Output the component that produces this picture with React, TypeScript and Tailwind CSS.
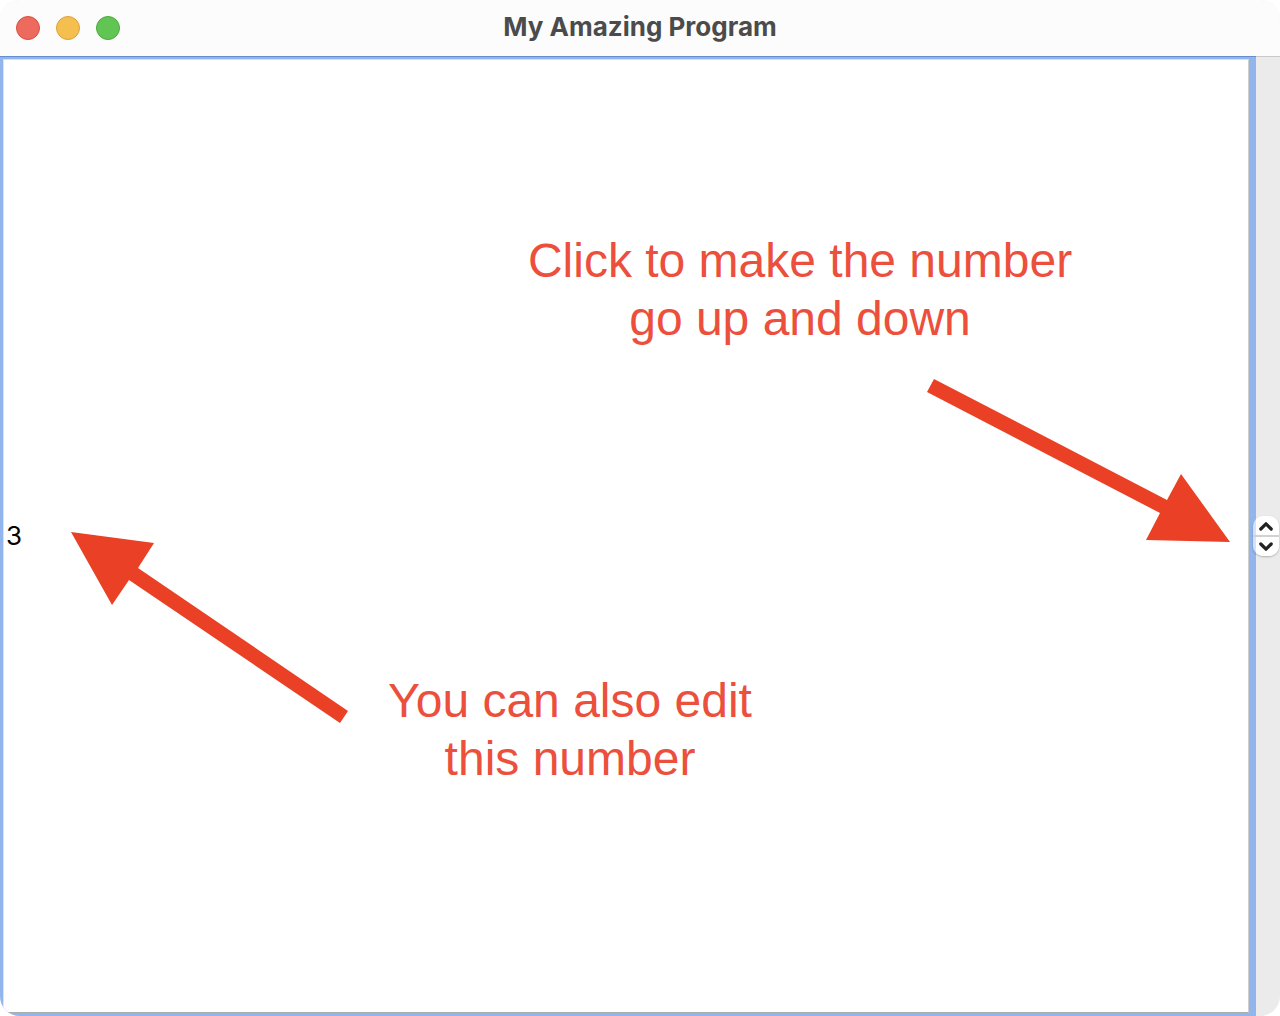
import { useState } from "react";

function Arrow({ points, className }: { points: string; className: string }) {
  return (
    <svg
      aria-hidden="true"
      className={`pointer-events-none absolute inset-0 h-full w-full overflow-visible ${className}`}
    >
      <polygon points={points} />
    </svg>
  );
}

function TitleBar() {
  return (
    <header className="grid h-14 shrink-0 grid-cols-[1fr_auto_1fr] items-center bg-[#fcfcfc] px-4">
      <div className="flex gap-4">
        <button aria-label="Close" className="size-6 rounded-full border border-[#d8503f] bg-[#ec6a5e]" />
        <button aria-label="Minimize" className="size-6 rounded-full border border-[#d8a13a] bg-[#f5bf4f]" />
        <button aria-label="Zoom" className="size-6 rounded-full border border-[#4fa73c] bg-[#61c554]" />
      </div>
      <h1 className="pb-0.5 font-['Inter',sans-serif] text-[26px] leading-8 font-bold text-[#4b4b4b]">
        My Amazing Program
      </h1>
    </header>
  );
}

export default function App() {
  const [value, setValue] = useState("3");
  const step = (delta: number) => setValue(String((Number(value) || 0) + delta));

  return (
    <div className="flex h-screen flex-col overflow-hidden rounded-[20px] bg-[#ebebeb] font-['Liberation_Sans',Arial,sans-serif]">
      <TitleBar />
      <main className="flex min-h-0 flex-1">
        <div className="relative flex flex-1 border-t border-t-[#648fcf] bg-[#91b5ec] pt-0.5 pr-[7px] pb-[3px] pl-[3px]">
          <input
            aria-label="Number"
            value={value}
            onChange={(e) => setValue(e.target.value)}
            className="min-w-0 flex-1 border border-t-[#d3dff2] border-r-[#cfcfcb] border-b-[#a9afb0] border-l-[#d9e2f0] bg-white pb-0.5 pl-0.5 font-['Inter',sans-serif] text-[26px] text-black outline-none"
          />
          <div className="pointer-events-none absolute inset-0 text-center text-5xl leading-[58px] text-[#ec4f3c]">
            <p className="absolute top-[175px] left-[510px] w-[580px]">
              Click to make the number
              <br />
              go up and down
            </p>
            <p className="absolute top-[615px] left-[370px] w-[400px]">
              You can also edit
              <br />
              this number
            </p>
            <Arrow
              className="fill-[#ea4025]"
              points="934,322 1167,443 1181,417 1230,485 1146,483 1160,456 927,335"
            />
            <Arrow
              className="fill-[#ea4025]"
              points="71,475 154,486 138,511 348,654 340,666 129,523 112,548"
            />
          </div>
        </div>
        <div className="flex w-6 shrink-0 items-center shadow-[inset_0_1px_0_#c9c9c9]">
          <div className="relative z-10 -ml-[3px] flex h-10 w-[26px] shrink-0 flex-col divide-y-2 divide-[#d2d2d2] overflow-hidden rounded-[10px] bg-linear-to-r from-[#d3e1f9] from-[3px] to-white to-[3px] shadow-[0_1px_2px_rgba(0,0,0,0.25)]">
            <button aria-label="Increase" onClick={() => step(1)} className="flex flex-1 items-center justify-center">
              <svg width="16" height="10" viewBox="0 0 16 10" fill="none" stroke="#222" strokeWidth="3.2" strokeLinecap="round" strokeLinejoin="round">
                <path d="M2.8 8 8 2.8 13.2 8" />
              </svg>
            </button>
            <button aria-label="Decrease" onClick={() => step(-1)} className="flex flex-1 items-center justify-center">
              <svg width="16" height="10" viewBox="0 0 16 10" fill="none" stroke="#222" strokeWidth="3.2" strokeLinecap="round" strokeLinejoin="round">
                <path d="M2.8 2 8 7.2 13.2 2" />
              </svg>
            </button>
          </div>
        </div>
      </main>
    </div>
  );
}
